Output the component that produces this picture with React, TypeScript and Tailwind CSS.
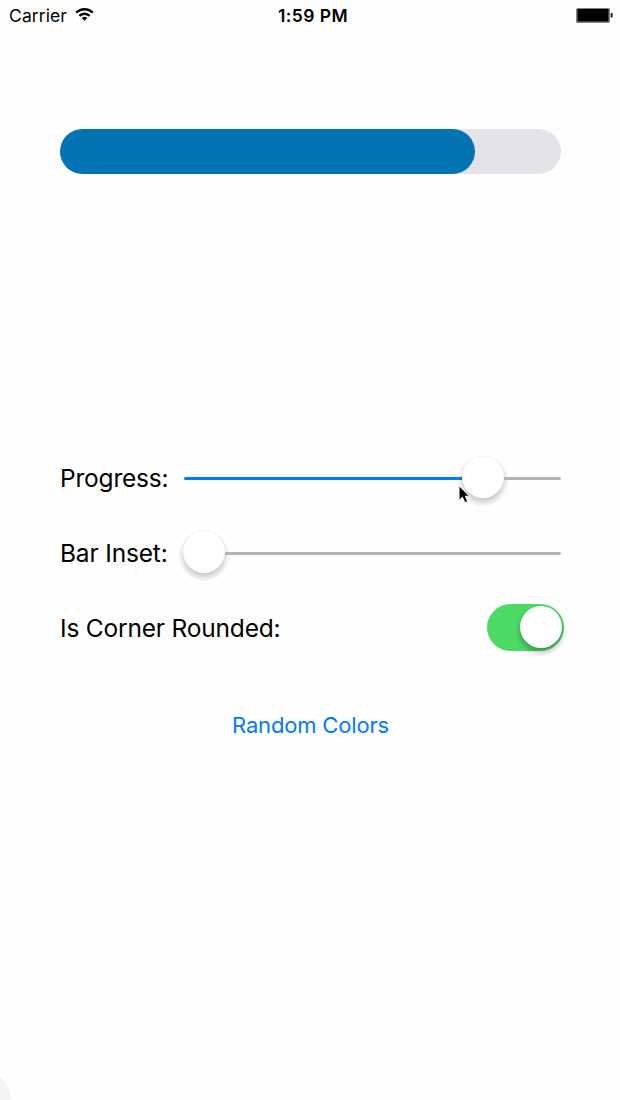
function StatusBar() {
  return (
    <header className="grid h-8 grid-cols-3 items-center pl-[9px] pr-[7px] text-black">
      <div className="flex items-center gap-[8px]">
        <span className="text-[17.5px] leading-8 tracking-[0.1px]">Carrier</span>
        <svg width="19" height="15" viewBox="0 0 20 15" fill="none" stroke="#000" strokeWidth="2.5" className="-mt-[3px]">
          <path d="M1.3 5.6a12.2 12.2 0 0 1 17.4 0" />
          <path d="M4.6 9a7.5 7.5 0 0 1 10.8 0" />
          <path d="M10 14.2 7.1 11.3a4.1 4.1 0 0 1 5.8 0Z" fill="#000" stroke="none" />
        </svg>
      </div>
      <span className="pl-[4px] text-center text-[17.5px] font-semibold leading-8 tracking-[0.45px]">1:59 PM</span>
      <svg width="37" height="16" viewBox="0 0 37 16" className="justify-self-end">
        <rect x="0" y="0" width="34" height="15" rx="1.5" fill="#858585" />
        <rect x="1.5" y="1" width="31" height="12.5" rx="0.5" fill="#000" />
        <path d="M34.7 5h.8q1.2 0 1.2 1.2v2q0 1.2-1.2 1.2h-.8Z" fill="#222" />
      </svg>
    </header>
  );
}

function Pointer() {
  return (
    <svg width="13" height="19" viewBox="0 0 13 19">
      <path
        d="M1 .7V15.4L4.4 12.2L6.9 17.7L9.8 16.5L7.4 11.2H11.6Z"
        fill="#000"
        stroke="#fff"
        strokeWidth="1"
      />
    </svg>
  );
}

function Knob() {
  return (
    <span className="h-[42px] w-[42px] shrink-0 rounded-full bg-white shadow-[0_0_1px_rgba(0,0,0,0.13),0_4px_4px_rgba(0,0,0,0.17),0_4px_0_4px_rgba(0,0,0,0.035)]" />
  );
}

function Slider({ value, pointer = false }: { value: number; pointer?: boolean }) {
  return (
    <div className="relative flex flex-1 items-center">
      <span className="h-[3px] rounded-l-full bg-[#007aff]" style={{ width: value }} />
      <span className="-mt-[3px] flex">
        <Knob />
      </span>
      <span className="h-[3px] flex-1 rounded-r-full bg-[#b4b4b4]" />
      {pointer && (
        <div className="absolute left-[274px] top-[26px]">
          <Pointer />
        </div>
      )}
    </div>
  );
}

function Toggle() {
  return (
    <div className="-mt-[2px] flex h-[47px] w-[77px] items-center justify-end rounded-full bg-[#4cd964] pr-[2px]">
      <span className="-mt-[1px] h-[42px] w-[42px] rounded-full bg-white shadow-[0_4px_5px_rgba(0,0,0,0.24),0_4px_0_4px_rgba(0,0,0,0.03)]" />
    </div>
  );
}

export default function App() {
  return (
    <div className="h-[1100px] w-[620px] overflow-hidden bg-[#fefefe] font-['Inter','Liberation_Sans',sans-serif]">
      <div className="relative flex h-full flex-col">
        <StatusBar />
        <main className="flex flex-col pl-[60px] pr-[59px] pt-[97px]">
          <div className="h-[45px] rounded-full bg-[#e4e3e9]">
            <div className="h-full w-[414.5px] rounded-full bg-[#0274b3]" />
          </div>

          <div className="mt-[279px] flex h-[50px] items-center text-black">
            <span className="w-[124px] whitespace-nowrap pt-[1px] text-[24.5px] tracking-[-0.2px]">Progress:</span>
            <Slider value={278} pointer />
          </div>
          <div className="mt-[25px] flex h-[50px] items-center text-black">
            <span className="w-[123px] whitespace-nowrap pt-[1px] text-[24.5px] tracking-[-0.17px]">Bar Inset:</span>
            <Slider value={0} />
          </div>
          <div className="-mr-[3px] mt-[25px] flex h-[50px] items-center justify-between text-black">
            <span className="whitespace-nowrap pt-[1px] text-[24.5px] tracking-[-0.19px]">Is Corner Rounded:</span>
            <Toggle />
          </div>

          <button className="mt-[52px] self-center text-[22px] leading-[40px] tracking-[-0.18px] text-[#007aff]">
            Random Colors
          </button>
        </main>
        <span className="absolute -left-[49px] top-[1070px] h-[60px] w-[60px] rounded-full bg-[#f3f3f3]" />
      </div>
    </div>
  );
}
